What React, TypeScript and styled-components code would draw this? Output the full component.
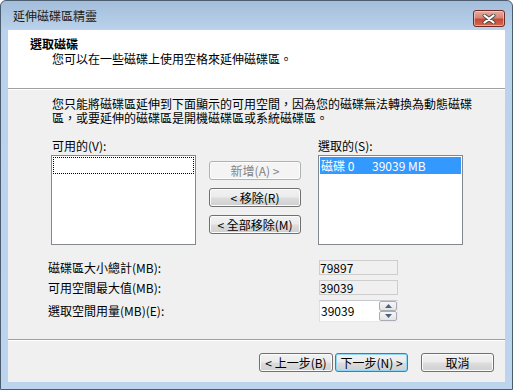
import React from "react";
import styled, { createGlobalStyle } from "styled-components";

const FONT = `"Noto Sans CJK TC", "Noto Sans CJK SC", sans-serif`;

const Global = createGlobalStyle`
  html, body { margin: 0; padding: 0; background: #ffffff; }
  body { font-family: ${FONT}; font-size: 12px; color: #000; }
  * { box-sizing: border-box; }
`;

const Window = styled.div`
  width: 513px;
  height: 390px;
  border: 1px solid #4d5d70;
  border-radius: 6px 6px 0 0;
  background: linear-gradient(#a3bedb 0px, #bad2eb 29px, #bcd4ed 100%);
  display: flex;
  flex-direction: column;
  padding: 0 7px 7px;
  overflow: hidden;
`;

const TitleBar = styled.div`
  height: 29px;
  display: flex;
  justify-content: space-between;
  align-items: flex-start;
  padding: 0 0 0 5px;
`;

const TitleText = styled.div`
  font-size: 12px;
  line-height: 14px;
  padding-top: 8px;
  color: #1a1a1a;
`;

const CloseButton = styled.div`
  width: 32px;
  height: 17px;
  margin-top: 9px;
  border: 1px solid #6f2a24;
  border-radius: 3px;
  background: linear-gradient(#e6aba2 0%, #d68677 45%, #c44a36 55%, #cf6a50 100%);
  box-shadow: inset 0 0 0 1px rgba(255, 220, 210, 0.55);
  display: flex;
  align-items: center;
  justify-content: center;
`;

const Client = styled.div`
  flex: 1;
  background: #f0f0f0;
  display: flex;
  flex-direction: column;
`;

const Header = styled.div`
  height: 58px;
  background: #ffffff;
  padding: 7px 0 0 22px;
`;

const HeaderTitle = styled.div`
  font-weight: bold;
  line-height: 14px;
`;

const HeaderSub = styled.div`
  line-height: 14px;
  margin-top: 1px;
  padding-left: 22px;
`;

const Separator = styled.div`
  height: 2px;
  border-top: 1px solid #a0a0a0;
  border-bottom: 1px solid #ffffff;
`;

const Body = styled.div`
  flex: 1;
  display: flex;
  flex-direction: column;
`;

const Paragraph = styled.div`
  margin-top: 7px;
  padding-left: 44px;
  line-height: 14px;
  white-space: nowrap;
`;

const ListArea = styled.div`
  margin-top: 14px;
  padding-left: 43px;
  display: flex;
  align-items: flex-start;
`;

const ListColumn = styled.div`
  display: flex;
  flex-direction: column;
`;

const FieldLabel = styled.div<{ $indent?: number }>`
  line-height: 14px;
  margin-bottom: 2px;
  padding-left: ${(p) => p.$indent ?? 0}px;
`;

const ListBox = styled.div`
  width: 145px;
  height: 90px;
  border: 1px solid #828790;
  background: #ffffff;
  padding: 1px;
`;

const ListItem = styled.div<{ $selected?: boolean; $focus?: boolean }>`
  height: 17px;
  line-height: 15px;
  display: flex;
  white-space: nowrap;
  background: ${(p) => (p.$selected ? "#3399ff" : "transparent")};
  color: ${(p) => (p.$selected ? "#ffffff" : "#000000")};
  border: 1px ${(p) => (p.$focus ? "dotted #000000" : "solid transparent")};
`;

const ItemCell = styled.span<{ $w?: number }>`
  display: inline-block;
  width: ${(p) => (p.$w ? `${p.$w}px` : "auto")};
`;

const ButtonColumn = styled.div`
  display: flex;
  flex-direction: column;
  gap: 8px;
  margin: 22px 17px 0 13px;
`;

const Btn = styled.button<{ $w: number; $default?: boolean }>`
  width: ${(p) => p.$w}px;
  height: 19px;
  padding: 0;
  margin: 0;
  font-family: ${FONT};
  font-size: 12px;
  line-height: 15px;
  color: #000;
  border: 1px solid ${(p) => (p.$default ? "#3c7fb1" : "#707070")};
  border-radius: 3px;
  background: linear-gradient(#f2f2f2 0%, #ebebeb 48%, #dddddd 52%, #cfcfcf 100%);
  box-shadow: inset 0 0 0 1px ${(p) => (p.$default ? "#8fd6f7" : "#fbfbfb")};
  white-space: nowrap;
  &:disabled {
    border-color: #adb2b5;
    background: #f4f4f4;
    box-shadow: inset 0 0 0 1px #fcfcfc;
    color: #838383;
  }
`;

const Fields = styled.div`
  margin-top: 15px;
  padding-left: 40px;
  display: grid;
  grid-template-columns: 271px 79px;
  grid-template-rows: 15px 15px 22px;
  row-gap: 5px;
  align-items: center;
`;

const RowLabel = styled.div`
  line-height: 14px;
  white-space: nowrap;
`;

const ReadOnlyBox = styled.div`
  height: 15px;
  border: 1px solid #cdcdcd;
  background: #f0f0f0;
  line-height: 13px;
  font-size: 12px;
`;

const SpinBox = styled.div`
  height: 22px;
  display: flex;
  align-items: center;
  justify-content: space-between;
  background: #ffffff;
  border: 1px solid;
  border-color: #c5c8ce #e3e9ef #e3e9ef #dbdfe6;
  padding: 0 0 0 1px;
`;

const SpinValue = styled.div`
  line-height: 14px;
`;

const SpinButtons = styled.div`
  display: flex;
  flex-direction: column;
  width: 18px;
  height: 20px;
`;

const SpinBtn = styled.div`
  flex: 1;
  border: 1px solid #a9adb3;
  border-radius: 2px;
  background: linear-gradient(#f6f6f6, #e4e4e4);
  display: flex;
  align-items: center;
  justify-content: center;
`;

const Footer = styled.div`
  display: flex;
  justify-content: flex-end;
  padding: 12px 11px 0 0;
  gap: 2px;
`;

const FooterSpacer = styled.div`
  width: 9px;
`;

const Sep2 = styled(Separator)`
  margin-top: 17px;
`;

export default function App() {
  return (
    <>
      <Global />
      <Window>
        <TitleBar>
          <TitleText>延伸磁碟區精靈</TitleText>
          <CloseButton>
            <svg width="14" height="10" viewBox="0 0 14 10">
              <path d="M2.5 1.5 L11.5 8.5 M11.5 1.5 L2.5 8.5" stroke="#4b4b4b" strokeWidth="4" strokeLinecap="round" fill="none" />
              <path d="M2.5 1.5 L11.5 8.5 M11.5 1.5 L2.5 8.5" stroke="#ffffff" strokeWidth="2.2" strokeLinecap="round" fill="none" />
            </svg>
          </CloseButton>
        </TitleBar>
        <Client>
          <Header>
            <HeaderTitle>選取磁碟</HeaderTitle>
            <HeaderSub>您可以在一些磁碟上使用空格來延伸磁碟區。</HeaderSub>
          </Header>
          <Separator />
          <Body>
            <Paragraph>
              您只能將磁碟區延伸到下面顯示的可用空間，因為您的磁碟無法轉換為動態磁碟
              <br />
              區，或要延伸的磁碟區是開機磁碟區或系統磁碟區。
            </Paragraph>
            <ListArea>
              <ListColumn>
                <FieldLabel $indent={1}>可用的(V):</FieldLabel>
                <ListBox>
                  <ListItem $focus />
                </ListBox>
              </ListColumn>
              <ButtonColumn>
                <Btn $w={92} disabled>新增(A) &gt;</Btn>
                <Btn $w={92}>&lt; 移除(R)</Btn>
                <Btn $w={92}>&lt; 全部移除(M)</Btn>
              </ButtonColumn>
              <ListColumn>
                <FieldLabel>選取的(S):</FieldLabel>
                <ListBox>
                  <ListItem $selected>
                    <ItemCell $w={51}>磁碟 0</ItemCell>
                    <ItemCell>39039 MB</ItemCell>
                  </ListItem>
                </ListBox>
              </ListColumn>
            </ListArea>
            <Fields>
              <RowLabel>磁碟區大小總計(MB):</RowLabel>
              <ReadOnlyBox>79897</ReadOnlyBox>
              <RowLabel>可用空間最大值(MB):</RowLabel>
              <ReadOnlyBox>39039</ReadOnlyBox>
              <RowLabel>選取空間用量(MB)(E):</RowLabel>
              <SpinBox>
                <SpinValue>39039</SpinValue>
                <SpinButtons>
                  <SpinBtn>
                    <svg width="7" height="4" viewBox="0 0 7 4">
                      <path d="M0 4 L3.5 0 L7 4 Z" fill="#4c6183" />
                    </svg>
                  </SpinBtn>
                  <SpinBtn>
                    <svg width="7" height="4" viewBox="0 0 7 4">
                      <path d="M0 0 L3.5 4 L7 0 Z" fill="#4c6183" />
                    </svg>
                  </SpinBtn>
                </SpinButtons>
              </SpinBox>
            </Fields>
            <Sep2 />
            <Footer>
              <Btn $w={74}>&lt; 上一步(B)</Btn>
              <Btn $w={73} $default>下一步(N) &gt;</Btn>
              <FooterSpacer />
              <Btn $w={73}>取消</Btn>
            </Footer>
          </Body>
        </Client>
      </Window>
    </>
  );
}
